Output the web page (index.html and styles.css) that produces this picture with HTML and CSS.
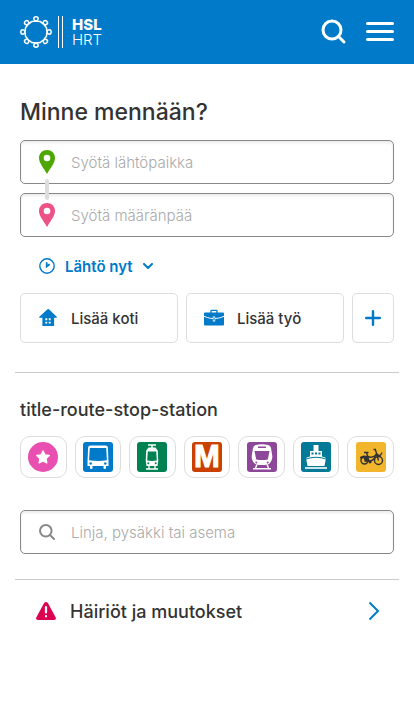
FILE: index.html
```html
<!DOCTYPE html>
<html lang="fi">
<head>
<meta charset="utf-8">
<meta name="viewport" content="width=device-width, initial-scale=1">
<title>HSL Reittiopas</title>
<link rel="stylesheet" href="styles.css">
</head>
<body>
<header class="topbar">
  <a class="logo" href="#" aria-label="HSL HRT">
    <svg width="32" height="32" viewBox="0 0 32 32" fill="none" stroke="#fff" stroke-width="1.500">
      <defs><path id="loop" d="M11.500 5.500C14 5.500 18.200 4.700 18.200 2.700C18.200 .2 13.800 .2 13.800 2.700C13.800 4.700 18 5.500 20.500 5.500"/></defs>
      <use href="#loop"/>
      <use href="#loop" transform="rotate(45 16 16)"/>
      <use href="#loop" transform="rotate(90 16 16)"/>
      <use href="#loop" transform="rotate(135 16 16)"/>
      <use href="#loop" transform="rotate(180 16 16)"/>
      <use href="#loop" transform="rotate(225 16 16)"/>
      <use href="#loop" transform="rotate(270 16 16)"/>
      <use href="#loop" transform="rotate(315 16 16)"/>
    </svg>
    <span class="logo-bars"></span>
    <span class="logo-text"><b>HSL</b><span>HRT</span></span>
  </a>
  <div class="topbar-actions">
    <button class="icon-button" aria-label="Haku">
      <svg width="26" height="26" viewBox="0 0 26 26" fill="none" stroke="#fff" stroke-width="3" stroke-linecap="round"><circle cx="11" cy="11" r="9"/><path d="M17.500 17.500L23 23"/></svg>
    </button>
    <button class="icon-button" aria-label="Valikko">
      <svg width="28" height="24" viewBox="0 0 28 24" stroke="#fff" stroke-width="3" stroke-linecap="round"><path d="M1.500 3.500h25M1.500 11.500h25M1.500 19.500h25"/></svg>
    </button>
  </div>
</header>

<main class="content">
  <section class="journey">
    <h1>Minne mennään?</h1>
    <div class="places">
      <label class="field">
        <svg class="field-icon" width="16" height="24" viewBox="0 0 16 24" fill="#4ea700"><path fill-rule="evenodd" d="M8 0C3.500 0 0 3.500 0 8c0 5 4.400 9.500 8 16 3.600-6.500 8-11 8-16 0-4.500-3.500-8-8-8zm0 4.700a3.300 3.300 0 1 1 0 6.600 3.300 3.300 0 0 1 0-6.600z"/></svg>
        <input type="text" placeholder="Syötä lähtöpaikka" aria-label="Lähtöpaikka">
      </label>
      <span class="connector"></span>
      <label class="field">
        <svg class="field-icon" width="16" height="24" viewBox="0 0 16 24" fill="#ec5188"><path fill-rule="evenodd" d="M8 0C3.500 0 0 3.500 0 8c0 5 4.400 9.500 8 16 3.600-6.500 8-11 8-16 0-4.500-3.500-8-8-8zm0 4.700a3.300 3.300 0 1 1 0 6.600 3.300 3.300 0 0 1 0-6.600z"/></svg>
        <input type="text" placeholder="Syötä määränpää" aria-label="Määränpää">
      </label>
    </div>
    <button class="departure">
      <svg width="16" height="16" viewBox="0 0 16 16" fill="none" stroke="currentColor"><circle cx="8" cy="8" r="7.200" stroke-width="1.400"/><path d="M7.700 4.200v4.200l3-2.200" stroke-width="1.800"/></svg>
      <span>Lähtö nyt</span>
      <svg width="10" height="6" viewBox="0 0 10 6" fill="none" stroke="currentColor" stroke-width="2" stroke-linecap="round" stroke-linejoin="round"><path d="M1 1l4 4 4-4"/></svg>
    </button>
    <div class="favourites">
      <button class="favourite">
        <svg width="20" height="20" viewBox="-0.500 0 20.500 20.500" fill="#007ac9"><path fill-rule="evenodd" d="M9.300 1.300a1 1 0 0 1 1.400 0L18.700 9c.5.600.2 1-.4 1H16v8.500H4V10H1.300c-.6 0-.8-.5-.4-1zM7 10.500v2h2v-2zm3.500 0v2h2v-2zM7 14v2h2v-2zm3.500 0v2h2v-2z"/></svg>
        <span>Lisää koti</span>
      </button>
      <button class="favourite">
        <svg width="20" height="20" viewBox="0 0 20 20"><path d="M7 5V3q0-.7.700-.7h4.600q.7 0 .7.700v2" fill="none" stroke="#007ac9" stroke-width="1.300"/><rect y="4.500" width="20" height="13" rx="1" fill="#007ac9"/><path d="M0 8.300c5 2 7 2.200 10 2.200s5-.2 10-2.200" fill="none" stroke="#fff"/><path d="M10 8.500v5" stroke="#fff" stroke-width="2.400"/><path d="M10 9.500v3" stroke="#007ac9" stroke-width="1.200"/></svg>
        <span>Lisää työ</span>
      </button>
      <button class="favourite favourite-add" aria-label="Lisää suosikki">
        <svg width="16" height="16" viewBox="0 0 16 16" stroke="#007ac9" stroke-width="2.400" stroke-linecap="round"><path d="M8 1.200v13.600M1.200 8h13.600"/></svg>
      </button>
    </div>
  </section>

  <section class="stops">
    <h2>title-route-stop-station</h2>
    <nav class="modes">
      <a class="mode" href="#" aria-label="Suosikit"><svg width="30" height="30" viewBox="0 0 30 30"><circle cx="15" cy="15" r="15" fill="#e84fb1"/><path d="M15 9l1.900 3.900 4.300.6-3.100 3 .7 4.300L15 18.800l-3.800 2 .7-4.300-3.100-3 4.300-.6z" fill="#fff" stroke="#fff" stroke-width="1.400" stroke-linejoin="round"/></svg></a>
      <a class="mode" href="#" aria-label="Bussit"><svg width="30" height="30" viewBox="0 0 30 30"><rect width="30" height="30" rx="3" fill="#007ac9"/><path d="M7.500 3.500h15q2.300 0 2.400 2L25.500 20v4H23v2.200q0 .8-1.200.8t-1.300-.8V24h-11v2.200q0 .8-1.200.8T7 26.200V24H4.500v-4l.6-14.500q.1-2 2.400-2z" fill="#fff"/><path d="M6.800 6h16.400l.7 12.300q-8.900 1.500-17.800 0z" fill="#007ac9"/><circle cx="7.700" cy="21.500" r="1.200" fill="#007ac9"/><circle cx="22.300" cy="21.500" r="1.200" fill="#007ac9"/></svg></a>
      <a class="mode" href="#" aria-label="Raitiovaunut"><svg width="30" height="30" viewBox="0 0 30 30"><rect width="30" height="30" rx="3" fill="#008151"/><path d="M11 3h8M15 3v4" stroke="#fff" stroke-width="1.500"/><path d="M11.500 5.500h7l2.200 3 .6 10-.8 5.500h-11l-.8-5.500.6-10z" fill="#fff"/><path d="M10.800 9.500h8.400l.6 9q-4.800.8-9.600 0z" fill="#008151"/><circle cx="11.300" cy="21.300" r="1" fill="#008151"/><circle cx="18.700" cy="21.300" r="1" fill="#008151"/><path d="M12 24v2.500M18 24v2.500M9 27h12" stroke="#fff" stroke-width="1.400"/></svg></a>
      <a class="mode" href="#" aria-label="Metro"><span class="metro">M</span></a>
      <a class="mode" href="#" aria-label="Junat"><svg width="30" height="30" viewBox="0 0 30 30"><rect width="30" height="30" rx="3" fill="#8c4799"/><path d="M9 3Q15 1.500 21 3q2.500.6 3 3l1.300 8q.2 3-1.300 5.500-1.200 2.500-3.500 3-5.500 1-11 0-2.300-.5-3.500-3Q4.500 17 4.700 14L6 6q.5-2.400 3-3z" fill="#fff"/><path d="M7.500 9h15l-1.700 8.500q-5.800 1-11.600 0zM11 4.500h8V6h-8z" fill="#8c4799"/><circle cx="9.300" cy="20.500" r="1" fill="#8c4799"/><circle cx="20.700" cy="20.500" r="1" fill="#8c4799"/><path d="M10 22.500L8.500 26M20 22.500l1.500 3.500M6 26.700h18" stroke="#fff" stroke-width="1.500"/></svg></a>
      <a class="mode" href="#" aria-label="Lautat"><svg width="30" height="30" viewBox="0 0 30 30"><rect width="30" height="30" rx="3" fill="#007a97"/><path d="M12.500 3h5v6H21v5.500q3 .6 4 1.500l-1.500 8h-17L5 16q1-.9 4-1.500V9h3.500z" fill="#fff"/><path d="M10.500 10.500h2v2h-2zm3.500 0h2v2h-2zm3.500 0h2v2h-2z" fill="#007a97"/><path d="M5 17q10-3.500 20 0" fill="none" stroke="#007a97"/><path d="M4 26h22" stroke="#cce4ea" stroke-width="2"/></svg></a>
      <a class="mode" href="#" aria-label="Kaupunkipyörät"><svg width="30" height="30" viewBox="0 0 30 30"><rect width="30" height="30" rx="3" fill="#f2b62d"/><g fill="none" stroke="#333" stroke-width="1.400"><circle cx="8.500" cy="18.500" r="3.500"/><circle cx="22.500" cy="18.500" r="4"/><path d="M8 10.500h4.500M10.500 10.500L13 19h-4.500M13 19q5 .5 7-7M19.500 8l3 10.500M17.500 7.500h2.500M12 14.500q4 2 8-1.500"/></g><path d="M4 15q3-2.500 7-1l1.500 5.500H9L7.500 16 4 16.500zM20.500 11l3 2 2.500-3 .5 1-2.500 4-3.500-1z" fill="#333"/><circle cx="14" cy="19.800" r="1.600" fill="#333"/></svg></a>
    </nav>
    <label class="field">
      <svg class="field-icon" width="16" height="16" viewBox="0 0 16 16" fill="none" stroke="#888" stroke-width="2" stroke-linecap="round"><circle cx="6.800" cy="6.800" r="5.800"/><path d="M11 11l4 4"/></svg>
      <input type="text" placeholder="Linja, pysäkki tai asema" aria-label="Linja, pysäkki tai asema">
    </label>
  </section>

  <a class="disruptions" href="#">
    <svg width="20" height="18" viewBox="0 0 20 18"><path d="M8.100 1.100Q10-1 11.900 1.100L19.700 15.500Q20.500 18 18 18H2Q-.5 18 .3 15.500z" fill="#dc0451"/><path d="M10 5v5.500M10 14v.3" stroke="#fff" stroke-width="2.200" stroke-linecap="round"/></svg>
    <span>Häiriöt ja muutokset</span>
    <svg class="chevron" width="12" height="20" viewBox="0 0 12 20" fill="none" stroke="#007ac9" stroke-width="2"><path d="M1.500 1.500L10 10l-8.500 8.500"/></svg>
  </a>
</main>
</body>
</html>
```
FILE: styles.css
```css
* {
  box-sizing: border-box;
}

body {
  margin: 0;
  background: #fff;
  color: #333;
  font-family: Inter, "Liberation Sans", sans-serif;
  font-size: 15px;
}

button {
  border: 0;
  padding: 0;
  background: none;
  color: inherit;
  font: inherit;
  cursor: pointer;
}

a {
  color: inherit;
  text-decoration: none;
}

svg {
  display: block;
  flex: none;
}

.topbar {
  display: flex;
  align-items: center;
  justify-content: space-between;
  height: 64px;
  padding: 0 20px;
  background: #007ac9;
  color: #fff;
}

.logo {
  display: flex;
  align-items: center;
}

.logo-bars {
  width: 5px;
  height: 32px;
  margin: 0 9px 0 6px;
  border: solid #fff;
  border-width: 0 1px;
}

.logo-text {
  display: flex;
  flex-direction: column;
  font-size: 15px;
  line-height: 15px;
}

.logo-text b {
  font-weight: 800;
}

.logo-text span {
  font-weight: 300;
}

.topbar-actions {
  display: flex;
  align-items: center;
  gap: 19px;
}

.content {
  padding: 0 15px;
}

.journey,
.stops {
  padding: 0 5px;
  border-bottom: 1px solid #ccc;
}

.journey {
  padding-top: 32px;
  padding-bottom: 29px;
}

.stops {
  padding-top: 25px;
  padding-bottom: 25px;
}

h1 {
  margin: 0 0 12px;
  font-size: 23px;
  line-height: 32px;
  font-weight: 500;
}

h2 {
  margin: 0 0 14px;
  font-size: 18px;
  line-height: 24px;
  font-weight: 500;
}

.places {
  position: relative;
  display: grid;
  gap: 9px;
}

.field {
  display: flex;
  align-items: center;
  gap: 16px;
  height: 44px;
  padding: 0 18px;
  border: 1px solid #888;
  border-radius: 5px;
  box-shadow: inset 0 2px 3px rgba(0, 0, 0, 0.08);
}

.field input {
  flex: 1;
  min-width: 0;
  border: 0;
  padding: 2px 0 0;
  outline: 0;
  background: none;
  color: #333;
  font: 300 15px/20px Inter, "Liberation Sans", sans-serif;
}

.field input::placeholder {
  color: #aaa;
  opacity: 1;
}

.connector {
  position: absolute;
  top: 39px;
  left: 25px;
  width: 4px;
  height: 21px;
  border-radius: 2px;
  background: #ddd;
}

.departure {
  display: flex;
  align-items: center;
  gap: 10px;
  height: 20px;
  margin: 19px 0 17px 19px;
  color: #007ac9;
  font-weight: 600;
}

.favourites {
  display: flex;
  gap: 8px;
}

.favourite {
  display: flex;
  flex: 1;
  align-items: center;
  gap: 13px;
  height: 50px;
  padding: 0 17px;
  border: 1px solid #ddd;
  border-radius: 5px;
  font-weight: 500;
}

.favourite-add {
  flex: 0 0 42px;
  justify-content: center;
  padding: 0;
}

.modes {
  display: grid;
  grid-template-columns: repeat(7, 1fr);
  gap: 8px;
  margin-bottom: 32px;
}

.mode {
  display: flex;
  align-items: center;
  justify-content: center;
  height: 42px;
  border: 1px solid #ddd;
  border-radius: 10px;
}

.metro {
  width: 30px;
  height: 30px;
  border-radius: 3px;
  background: #ca4000;
  color: #fff;
  font: bold 31px/30px "Liberation Sans", sans-serif;
  text-align: center;
  -webkit-text-stroke: 1px #fff;
}

.disruptions {
  display: flex;
  align-items: center;
  gap: 14px;
  height: 62px;
  padding: 0 19px 0 21px;
  font-size: 18px;
  font-weight: 500;
}

.chevron {
  margin-left: auto;
}
```
